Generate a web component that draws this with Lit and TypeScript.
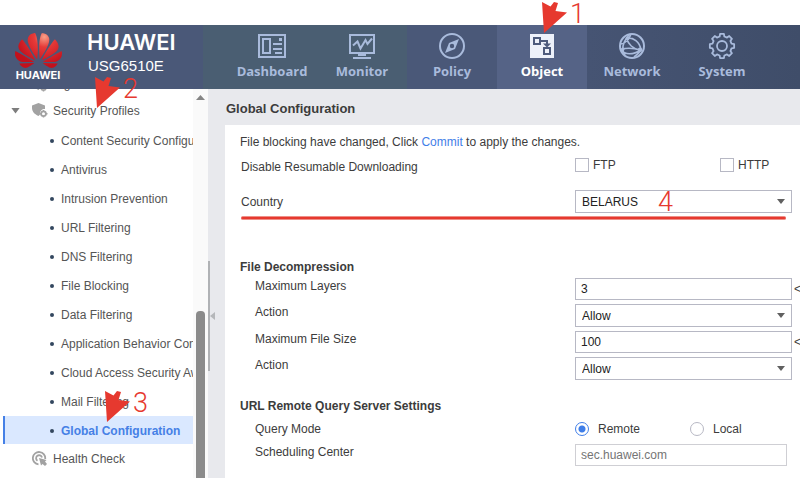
import { LitElement, html, css, svg } from "lit";
import { customElement, property, state } from "lit/decorators.js";
import { classMap } from "lit/directives/class-map.js";

// Outline of an eight-toothed cog centred in a 28-unit box.
const cogPath = () => {
  const points: string[] = [];
  const at = (radius: number, degrees: number) => {
    const a = (degrees * Math.PI) / 180;
    points.push(`${(14 + radius * Math.sin(a)).toFixed(2)} ${(14 - radius * Math.cos(a)).toFixed(2)}`);
  };
  for (let tooth = 0; tooth < 360; tooth += 45) {
    at(9.8, tooth - 14);
    at(12.3, tooth - 9);
    at(12.3, tooth + 9);
    at(9.8, tooth + 14);
  }
  return `M${points.join("L")}Z`;
};

const navIcons = {
  Dashboard: svg`<g fill="none" stroke="currentColor" stroke-width="2">
      <rect x="1" y="3" width="26" height="22"/><rect x="5" y="7" width="7" height="14"/></g>
      <path fill="currentColor" d="M21 6h3v3h-3zM15 11h9v2h-9zM15 16h9v2h-9zM17 20h7v2h-7z"/>`,
  Monitor: svg`<g fill="none" stroke="currentColor" stroke-width="2">
      <rect x="2" y="3" width="24" height="18"/>
      <path d="M5 13.500l4.500-4 3 7 5-8.500 2 4 4.500-5.500"/></g>
      <path fill="currentColor" d="M10 22h8v2h-8zM5 25h18v2H5z"/>`,
  Policy: svg`<circle cx="14" cy="14" r="12" fill="none" stroke="currentColor" stroke-width="2"/>
      <path fill="currentColor" fill-rule="evenodd" d="M21 7l-4 10L7 21l4-10zM14 11.800a2.200 2.200 0 1 0 0 4.400 2.200 2.200 0 0 0 0-4.400z"/>`,
  Object: svg`<path fill="#edf1fa" d="M2 2h24v24H2z"/>
      <g fill="none" stroke="#4d5b7d" stroke-width="2"><rect x="6" y="6" width="6" height="6"/>
      <rect x="16" y="16" width="6" height="6"/><path d="M12 9h7v4"/></g>
      <path fill="#4d5b7d" d="M15 11.500h8l-4 4z"/>`,
  Network: svg`<g fill="none" stroke="currentColor" stroke-width="2"><circle cx="14" cy="14" r="12"/>
      <path stroke-width="1.600" d="M11 3C5 10 3 17 7 23M3 12c4-1 8-4 10-10M9 6c6-1 13 4 14 12M9 7c1 5 6 10 13 11M3 17c6-1 13-1 19 1M3 18c4 5 12 5 20 0M16 25c3-2 5-4 7-7"/></g>
      <g fill="currentColor"><circle cx="9.500" cy="6.500" r="2"/><circle cx="5" cy="17" r="1.600"/><circle cx="22" cy="17.800" r="2.200"/></g>`,
  System: svg`<g fill="none" stroke="currentColor" stroke-width="1.800" stroke-linejoin="round">
      <path d=${cogPath()}/><circle cx="14" cy="14" r="5"/></g>`,
};

const shieldIcon = svg`<path fill="#a2a2a2" d="M0 2.500L6.500 0 13 2.500v3.500c-3 0-5.500 2-5 5.500L6.500 13C2 11 0 8 0 5z"/>
  <circle cx="11.500" cy="10.800" r="2.400" fill="none" stroke="#a2a2a2" stroke-width="1.800"/>
  <path stroke="#a2a2a2" stroke-width="1.500" d="M11.500 7v2M11.500 12.500v2M7.500 10.800h2M13.500 10.800h2"/>`;

const healthIcon = svg`<g fill="none" stroke="#a2a2a2" stroke-width="1.800"><path d="M6.500 13.400A6.200 6.200 0 1 1 13.200 8"/>
  <path d="M5.500 9.800A3 3 0 1 1 10 6.500"/></g><path fill="#a2a2a2" d="M7 7l7.500 2-1.500 1.500 2 2.500-2 2-2.500-2-1.500 1.500z"/>`;

@customElement("brand-logo")
export class BrandLogo extends LitElement {
  static styles = css`
    :host { display: flex; align-items: flex-start; width: 227px; flex: none; color: #fff; }
    .mark { display: flex; flex-direction: column; align-items: center; width: 48px; margin: 8px 25px 0 14px; }
    .petals { width: 47px; height: 35px; }
    .small { font: 700 11px/14px Inter, sans-serif; }
    .names { padding-top: 4px; }
    .word { font: 600 22px/26px Inter, sans-serif; }
    .model { padding-left: 1px; font: 15px/22px "Liberation Sans", sans-serif; }
  `;
  render() {
    return html`
      <div class="mark">
        <svg class="petals" viewBox="0 2.960 24 18.100" preserveAspectRatio="none" aria-hidden="true">
          <defs><radialGradient id="red" gradientUnits="userSpaceOnUse" cx="15" cy="5" r="15">
            <stop offset="0" stop-color="#f8a088"/><stop offset=".35" stop-color="#e63a38"/><stop offset="1" stop-color="#c2101c"/>
          </radialGradient></defs>
          <path fill="url(#red)" d="M3.67 6.14S1.82 7.91 1.72 9.78v.35c.08 1.51 1.22 2.4 1.22 2.4 1.83 1.79 6.26 4.04 7.3 4.55 0 0 .06.03.1-.01l.02-.04v-.04C7.52 10.8 3.67 6.14 3.67 6.14zM9.65 18.6c-.02-.08-.1-.08-.1-.08l-7.38.26c.8 1.43 2.15 2.53 3.56 2.2.96-.25 3.16-1.78 3.88-2.3.06-.05.04-.09.04-.09zm.08-.78C6.49 15.63.21 12.28.21 12.28c-.15.46-.2.9-.21 1.3v.07c0 1.07.4 1.82.4 1.82.8 1.69 2.34 2.2 2.34 2.2.7.3 1.4.31 1.4.31.12.02 4.4 0 5.54 0 .05 0 .08-.05.08-.05v-.06c0-.03-.03-.05-.03-.05zM9.06 3.19a3.42 3.42 0 00-2.57 3.15v.41c.03.6.16 1.05.16 1.05.66 2.9 3.86 7.65 4.55 8.65.05.05.1.03.1.03a.1.1 0 00.06-.1c1.06-10.6-1.11-13.42-1.11-13.42-.32.02-1.19.23-1.19.23zm8.299 2.27s-.49-1.8-2.44-2.28c0 0-.57-.14-1.17-.22 0 0-2.18 2.81-1.12 13.43.01.07.06.08.06.08.07.03.1-.03.1-.03.72-1.03 3.9-5.76 4.55-8.64 0 0 .36-1.4.02-2.34zm-2.92 13.07s-.07 0-.09.05c0 0-.01.07.03.1.7.51 2.85 2 3.88 2.3 0 0 .16.05.43.06h.14c.69-.02 1.9-.37 3-2.26l-7.4-.25zm7.83-8.41c.14-2.06-1.94-3.97-1.94-3.98 0 0-3.85 4.66-6.67 10.8 0 0-.03.08.02.13l.04.01h.06c1.06-.53 5.46-2.77 7.28-4.54 0 0 1.15-.93 1.21-2.42zm1.52 2.14s-6.28 3.37-9.52 5.55c0 0-.05.04-.03.11 0 0 .03.06.07.06 1.16 0 5.56 0 5.67-.02 0 0 .57-.02 1.27-.29 0 0 1.56-.5 2.37-2.27 0 0 .73-1.45.17-3.14z"/>
        </svg>
        <span class="small">HUAWEI</span>
      </div>
      <div class="names"><div class="word">HUAWEI</div><div class="model">USG6510E</div></div>
    `;
  }
}

@customElement("top-nav")
export class TopNav extends LitElement {
  static styles = css`
    :host { display: block; }
    .bar {
      display: flex; height: 64px;
      background: linear-gradient(90deg, #4a5878 203px, #4a5e72 203px 407px, #4a5878 407px 498px, #465473 588px, #3f4d69);
    }
    .items { display: flex; }
    .item {
      display: flex; flex-direction: column; align-items: center; gap: 2px;
      width: 90px; padding: 7px 0 0; border: 0; background: none; color: #a9bbdc;
      font: 700 13px/18px "Open Sans", sans-serif; cursor: pointer;
    }
    .current { background: #556386; color: #fff; }
    .icon { width: 28px; height: 28px; }
  `;
  @state() private current = "Object";
  render() {
    return html`<header class="bar">
      <brand-logo></brand-logo>
      <nav class="items">
        ${Object.entries(navIcons).map(([name, icon]) => html`
          <button class=${classMap({ item: true, current: name === this.current })} @click=${() => (this.current = name)}>
            <svg class="icon" viewBox="0 0 28 28" aria-hidden="true">${icon}</svg>${name}
          </button>`)}
      </nav>
    </header>`;
  }
}

@customElement("side-menu")
export class SideMenu extends LitElement {
  static styles = css`
    :host { display: flex; width: 208px; flex: none; background: #fff; overflow: hidden; font: 12px/16px "Liberation Sans", sans-serif; }
    .tree { flex: 1; min-width: 0; overflow: hidden; margin: -18px 0 0; padding: 0; list-style: none; }
    .group { display: flex; align-items: center; box-sizing: border-box; height: 29px; padding: 0 0 2px 11px; color: #555; }
    .scrolled { height: 26px; padding-bottom: 0; }
    .toggle { width: 9px; height: 6px; margin-right: 12px; }
    .open { background: #7d7d7d; clip-path: polygon(0 0, 100% 0, 50% 100%); }
    .icon { width: 16px; height: 15px; margin-right: 5px; }
    .leaf { display: flex; align-items: center; height: 29px; padding-left: 50px; color: #555; text-decoration: none; white-space: nowrap; }
    .leaf::before { content: ""; flex: none; width: 4px; height: 4px; margin-right: 7px; border-radius: 50%; background: #33475f; }
    .picked { box-sizing: border-box; height: 28px; margin: 0 0 1px 3px; padding: 2px 0 0 45px; border-left: 2px solid #4580e6; background: #dae8ff; color: #4580e6; font-weight: 700; }
    .scroll { display: flex; flex-direction: column; align-items: center; width: 15px; background: #fafafa; }
    .up { width: 9px; height: 5px; margin: 6px 0 3px; background: #858585; clip-path: polygon(50% 0, 100% 100%, 0 100%); }
    .track { flex: 205; }
    .thumb { flex: 169; width: 9px; border-radius: 4px 4px 0 0; background: #8b8b8b; }
  `;
  @property() selected = "Global Configuration";
  private leaves = ["Content Security Configuration", "Antivirus", "Intrusion Prevention", "URL Filtering", "DNS Filtering",
    "File Blocking", "Data Filtering", "Application Behavior Control", "Cloud Access Security Awareness", "Mail Filtering", "Global Configuration"];
  render() {
    const icon = (shape: unknown) => html`<svg class="icon" viewBox="0 0 16 15" aria-hidden="true">${shape}</svg>`;
    return html`
      <ul class="tree">
        <li class="group scrolled"><span class="toggle"></span>${icon(shieldIcon)}Signature</li>
        <li class="group"><span class="toggle open"></span>${icon(shieldIcon)}Security Profiles</li>
        ${this.leaves.map((name) => html`<li><a href="#" class=${classMap({ leaf: true, picked: name === this.selected })}>${name}</a></li>`)}
        <li class="group"><span class="toggle"></span>${icon(healthIcon)}Health Check</li>
      </ul>
      <div class="scroll"><span class="up"></span><span class="track"></span><span class="thumb"></span></div>
    `;
  }
}

@customElement("config-form")
export class ConfigForm extends LitElement {
  static styles = css`
    :host { display: block; flex: 1; min-width: 0; font: 12px/16px "Liberation Sans", sans-serif; color: #3c3c3c; }
    * { box-sizing: border-box; }
    .page { position: relative; display: flex; flex-direction: column; height: 100%; padding-left: 17px; background: #e8e9ed; }
    .split { position: absolute; left: 0; top: 172px; width: 2px; height: 110px; background: #b0b2b5; }
    .fold { position: absolute; left: 2px; top: 223px; width: 5px; height: 8px; background: #b5b7ba; clip-path: polygon(0 50%, 100% 0, 100% 100%); }
    .title { margin: 0; padding: 12px 0 8px 1px; font-size: 13px; line-height: 16px; }
    .panel { flex: 1; padding: 9px 0 12px 15px; background: #fff; }
    .note { margin: 0 0 7px; }
    .link { color: #3f7ee8; text-decoration: none; }
    .row { display: flex; align-items: flex-start; margin-bottom: 4px; }
    .label { flex: none; width: 335px; padding-left: 15px; }
    .wide { padding-left: 1px; }
    .resume { margin-bottom: 13px; }
    .resume .label { line-height: 20px; }
    .country { position: relative; align-items: center; margin-bottom: 46px; }
    .country::after { content: ""; position: absolute; left: 1px; right: 14px; top: 26px; height: 2px; border: 1px solid #ee9088; border-width: 1px 0; border-radius: 2px; background: #e6392f; }
    .section { margin: 0 0 3px; font-size: 12px; line-height: 16px; }
    .server { margin: 18px 0 7px; }
    .mode { margin-bottom: 7px; }
    .choice { display: flex; align-items: center; gap: 4px; width: 145px; }
    .choice:last-child { width: auto; }
    .mode .choice { gap: 9px; }
    .mode .choice:not(:last-child) { width: 115px; }
    .tick, .dot { appearance: none; flex: none; width: 14px; height: 14px; margin: 0; border: 1px solid #b7b8c4; background: #fff; }
    .dot { border-radius: 50%; }
    .dot:checked { border-color: #3f7ee8; background: radial-gradient(circle, #3f7ee8 3px, #fff 4px); }
    .tick:checked { background: #3f7ee8; }
    .box { position: relative; display: flex; flex: 1; min-width: 0; }
    .pick::after { content: ""; position: absolute; right: 7px; top: 9px; width: 8px; height: 5px; background: #606060; clip-path: polygon(0 0, 100% 0, 50% 100%); pointer-events: none; }
    .field { appearance: none; width: 100%; height: 22px; margin: 0; padding: 0 5px; border: 1px solid #b7b8c4; border-radius: 0; background: #fff; color: #222; font: inherit; }
    .drop { height: 23px; padding: 0 6px; }
    .tail { flex: none; width: 8px; padding-left: 2px; line-height: 22px; overflow: hidden; }
    .slim { width: 13px; }
    .fixed { border-color: #cfcfd4; color: #757575; }
  `;
  private text(id: string, label: string, value: string) {
    return html`<div class="row"><label class="label" for=${id}>${label}</label>
      <div class="box"><input class="field" id=${id} .value=${value}></div><span class="tail">&lt;</span></div>`;
  }
  private pick(id: string, label: string, value: string, country = false) {
    return html`<div class=${classMap({ row: true, country })}><label class=${classMap({ label: true, wide: country })} for=${id}>${label}</label>
      <div class="box pick"><select class="field drop" id=${id}><option>${value}</option></select></div><span class="tail"></span></div>`;
  }
  render() {
    return html`<main class="page">
      <span class="split"></span><span class="fold"></span>
      <h1 class="title">Global Configuration</h1>
      <form class="panel">
        <p class="note">File blocking have changed, Click <a class="link" href="#">Commit</a> to apply the changes.</p>
        <div class="row resume"><span class="label wide">Disable Resumable Downloading</span>
          <label class="choice"><input class="tick" type="checkbox">FTP</label>
          <label class="choice"><input class="tick" type="checkbox">HTTP</label></div>
        ${this.pick("country", "Country", "BELARUS", true)}
        <h2 class="section">File Decompression</h2>
        ${this.text("layers", "Maximum Layers", "3")}
        ${this.pick("layers-action", "Action", "Allow")}
        ${this.text("size", "Maximum File Size", "100")}
        ${this.pick("size-action", "Action", "Allow")}
        <h2 class="section server">URL Remote Query Server Settings</h2>
        <div class="row mode"><span class="label">Query Mode</span>
          <label class="choice"><input class="dot" type="radio" name="mode" checked>Remote</label>
          <label class="choice"><input class="dot" type="radio" name="mode">Local</label></div>
        <div class="row"><label class="label" for="center">Scheduling Center</label>
          <div class="box"><input class="field fixed" id="center" value="sec.huawei.com" readonly></div><span class="tail slim"></span></div>
      </form>
    </main>`;
  }
}

@customElement("app-root")
export class AppRoot extends LitElement {
  static styles = css`
    :host { position: relative; display: flex; flex-direction: column; box-sizing: border-box; min-height: 100vh; padding-top: 25px; background: #fff; overflow: hidden; }
    .body { display: flex; flex: 1; }
    .step { position: absolute; display: flex; align-items: flex-start; gap: 2px; pointer-events: none; color: #e6392f; font: 300 27px/24px Roboto, sans-serif; }
    .arrow { width: 26px; height: 32px; fill: #e6392f; }
    .object { left: 542px; top: 2px; }
    .profiles { left: 95px; top: 77px; }
    .global { left: 105px; top: 391px; }
    .country { left: 658px; top: 190px; }
  `;
  private step(digit: string, place: string, arrow = true) {
    return html`<div class="step ${place}">
      ${arrow ? html`<svg class="arrow" viewBox="0 0 26 32" aria-hidden="true"><path d="M0 0l8.500 4.500L12 0l4 1-2.500 8L25 10.500 2 31z"/></svg>` : ""}
      <span>${digit}</span></div>`;
  }
  render() {
    return html`
      <top-nav></top-nav>
      <div class="body"><side-menu></side-menu><config-form></config-form></div>
      ${this.step("1", "object")}${this.step("2", "profiles")}${this.step("3", "global")}${this.step("4", "country", false)}
    `;
  }
}
